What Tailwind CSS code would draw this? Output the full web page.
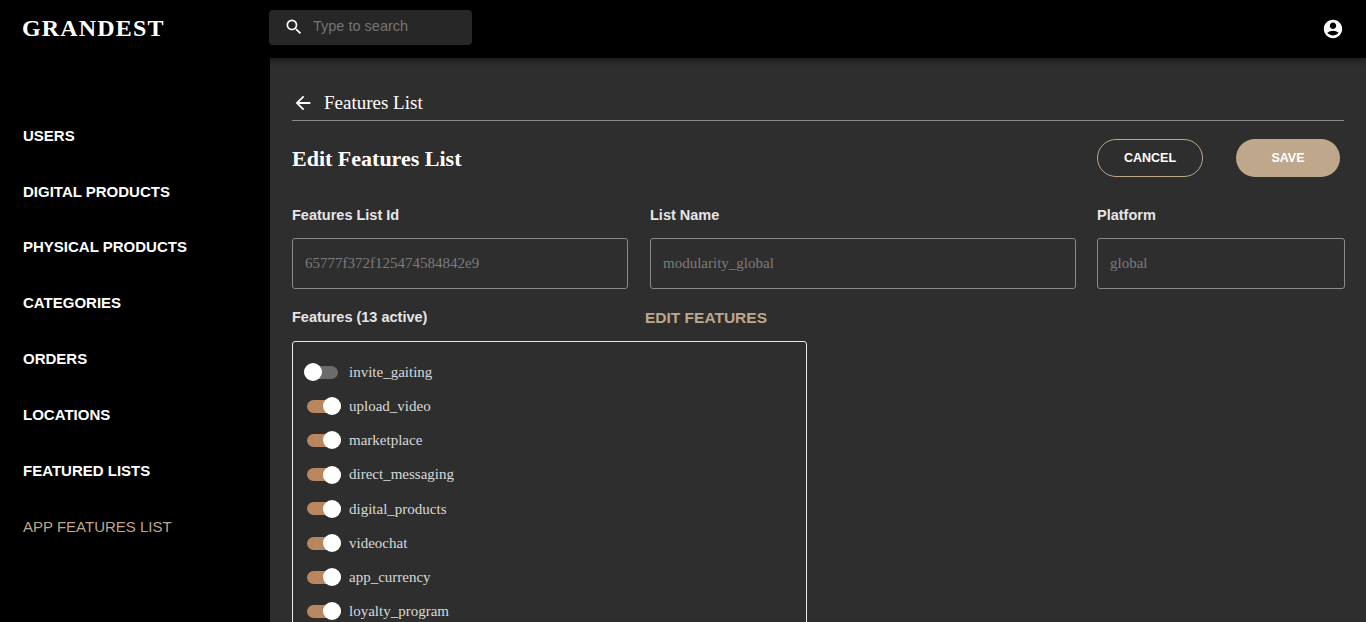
<!DOCTYPE html>
<html>
<head>
<meta charset="utf-8">
<script src="https://cdn.jsdelivr.net/npm/@tailwindcss/browser@4"></script>
</head>
<body class="bg-black">
<div class="w-[1366px] h-[622px] overflow-hidden flex flex-col bg-black text-white font-['Liberation_Serif',serif]">
  <header class="h-[58px] shrink-0 flex items-center relative z-10 shadow-[0_2px_6px_rgba(0,0,0,0.5)]">
    <div class="w-[269px] pl-[22px] pb-[3px] text-[24px] leading-none font-semibold tracking-[1.15px]">GRANDEST</div>
    <div class="w-[203px] h-[35px] mb-[4px] rounded bg-[#272727] flex items-center pl-[15px] gap-[9px]">
      <svg class="w-[20px] h-[20px]" viewBox="0 0 24 24" fill="#fff"><path d="M15.5 14h-.79l-.28-.27A6.471 6.471 0 0 0 16 9.5 6.5 6.5 0 1 0 9.5 16c1.61 0 3.09-.59 4.23-1.57l.27.28v.79l5 4.99L20.49 19l-4.99-5zm-6 0C7.01 14 5 11.99 5 9.5S7.01 5 9.5 5 14 7.01 14 9.5 11.99 14 9.5 14z"/></svg>
      <span class="font-['Liberation_Sans_Narrow','Liberation_Sans',sans-serif] text-[14.5px] text-[#757575]">Type to search</span>
    </div>
    <svg class="w-[22px] h-[22px] absolute left-[1322px] top-[18px]" viewBox="0 0 24 24" fill="#fff"><path d="M12 2C6.48 2 2 6.48 2 12s4.48 10 10 10 10-4.48 10-10S17.52 2 12 2zm0 3c1.93 0 3.5 1.57 3.5 3.5S13.93 12 12 12s-3.5-1.57-3.5-3.5S10.07 5 12 5zm0 14c-2.03 0-4.43-.82-6.14-2.88C7.55 14.8 9.68 14 12 14s4.45.8 6.14 2.12C16.43 18.18 14.03 19 12 19z"/></svg>
  </header>
  <div class="flex flex-1 min-h-0">
    <nav class="w-[270px] shrink-0 pt-[50px] pl-[23px] font-['Liberation_Sans_Narrow','Liberation_Sans',sans-serif] text-[15px] font-bold">
      <div class="h-[55.86px] flex items-center">USERS</div>
      <div class="h-[55.86px] flex items-center">DIGITAL PRODUCTS</div>
      <div class="h-[55.86px] flex items-center">PHYSICAL PRODUCTS</div>
      <div class="h-[55.86px] flex items-center">CATEGORIES</div>
      <div class="h-[55.86px] flex items-center">ORDERS</div>
      <div class="h-[55.86px] flex items-center">LOCATIONS</div>
      <div class="h-[55.86px] flex items-center">FEATURED LISTS</div>
      <div class="h-[55.86px] flex items-center font-normal text-[#bfa78c]">APP FEATURES LIST</div>
    </nav>
    <main class="flex-1 bg-[#2e2e2e] pl-[22px] pr-[22px] pt-[28px] overflow-hidden">
      <div class="h-[34px] flex items-center border-b border-[#8a8a8a] box-content pb-0">
        <svg class="w-[22px] h-[22px] ml-0" viewBox="0 0 24 24" fill="#fff"><path d="M20 11H7.83l5.59-5.59L12 4l-8 8 8 8 1.41-1.41L7.83 13H20v-2z"/></svg>
        <span class="ml-[10px] text-[19px]">Features List</span>
      </div>
      <div class="flex items-center mt-[18px] h-[38px]">
        <h1 class="text-[22px] font-bold flex-1">Edit Features List</h1>
        <button class="w-[106px] h-[38px] rounded-full border border-[#bfa78c] font-['Liberation_Sans_Narrow','Liberation_Sans',sans-serif] text-[12.5px] font-bold">CANCEL</button>
        <button class="w-[104px] h-[38px] ml-[33px] mr-[4px] rounded-full bg-[#bfa78c] font-['Liberation_Sans_Narrow','Liberation_Sans',sans-serif] text-[12.5px] font-bold">SAVE</button>
      </div>
      <div class="grid grid-cols-[336px_426px_247px] gap-x-[22px] mt-[29px] font-['Liberation_Sans_Narrow','Liberation_Sans',sans-serif] text-[14.5px] font-bold text-[#e6e6e6]">
        <div class="h-[20px] flex items-center">Features List Id</div>
        <div class="h-[20px] flex items-center">List Name</div>
        <div class="h-[20px] flex items-center -ml-[1px]">Platform</div>
      </div>
      <div class="grid grid-cols-[336px_426px_247px] gap-x-[22px] mt-[12px] font-['Liberation_Serif',serif] text-[15px] text-[#7c7c7c]">
        <div class="h-[51px] rounded-[3px] border border-[#8a8a8a] flex items-center pl-[12px]">65777f372f125474584842e9</div>
        <div class="h-[51px] rounded-[3px] border border-[#8a8a8a] flex items-center pl-[12px]">modularity_global</div>
        <div class="h-[51px] rounded-[3px] border border-[#8a8a8a] flex items-center pl-[12px] -ml-[1px]">global</div>
      </div>
      <div class="flex w-[514px] h-[20px] items-center mt-[19px] font-['Liberation_Sans_Narrow','Liberation_Sans',sans-serif] text-[14.5px] font-bold">
        <span class="text-[#e6e6e6]">Features (13 active)</span>
        <span class="ml-auto mr-[39px] text-[#bfa78c] text-[15.5px]">EDIT FEATURES</span>
      </div>
      <div class="w-[515px] h-[400px] mt-[13px] rounded-[3px] border border-[#e8e8e8] pt-[13px] pl-[11px] text-[15px] text-[#d9d9d9]">
        <div class="h-[34.2px] flex items-center">
          <div class="relative w-[34px] h-[13px] rounded-full bg-[#6b6b6b]"><div class="absolute left-0 -top-[2.5px] w-[18px] h-[18px] rounded-full bg-white"></div></div>
          <span class="ml-[11px]">invite_gaiting</span>
        </div>
        <div class="h-[34.2px] flex items-center">
          <div class="relative w-[34px] h-[13px] ml-[3px] rounded-full bg-[#b9875f]"><div class="absolute right-0 -top-[2.5px] w-[18px] h-[18px] rounded-full bg-white"></div></div>
          <span class="ml-[8px]">upload_video</span>
        </div>
        <div class="h-[34.2px] flex items-center">
          <div class="relative w-[34px] h-[13px] ml-[3px] rounded-full bg-[#b9875f]"><div class="absolute right-0 -top-[2.5px] w-[18px] h-[18px] rounded-full bg-white"></div></div>
          <span class="ml-[8px]">marketplace</span>
        </div>
        <div class="h-[34.2px] flex items-center">
          <div class="relative w-[34px] h-[13px] ml-[3px] rounded-full bg-[#b9875f]"><div class="absolute right-0 -top-[2.5px] w-[18px] h-[18px] rounded-full bg-white"></div></div>
          <span class="ml-[8px]">direct_messaging</span>
        </div>
        <div class="h-[34.2px] flex items-center">
          <div class="relative w-[34px] h-[13px] ml-[3px] rounded-full bg-[#b9875f]"><div class="absolute right-0 -top-[2.5px] w-[18px] h-[18px] rounded-full bg-white"></div></div>
          <span class="ml-[8px]">digital_products</span>
        </div>
        <div class="h-[34.2px] flex items-center">
          <div class="relative w-[34px] h-[13px] ml-[3px] rounded-full bg-[#b9875f]"><div class="absolute right-0 -top-[2.5px] w-[18px] h-[18px] rounded-full bg-white"></div></div>
          <span class="ml-[8px]">videochat</span>
        </div>
        <div class="h-[34.2px] flex items-center">
          <div class="relative w-[34px] h-[13px] ml-[3px] rounded-full bg-[#b9875f]"><div class="absolute right-0 -top-[2.5px] w-[18px] h-[18px] rounded-full bg-white"></div></div>
          <span class="ml-[8px]">app_currency</span>
        </div>
        <div class="h-[34.2px] flex items-center">
          <div class="relative w-[34px] h-[13px] ml-[3px] rounded-full bg-[#b9875f]"><div class="absolute right-0 -top-[2.5px] w-[18px] h-[18px] rounded-full bg-white"></div></div>
          <span class="ml-[8px]">loyalty_program</span>
        </div>
      </div>
    </main>
  </div>
</div>
</body>
</html>
